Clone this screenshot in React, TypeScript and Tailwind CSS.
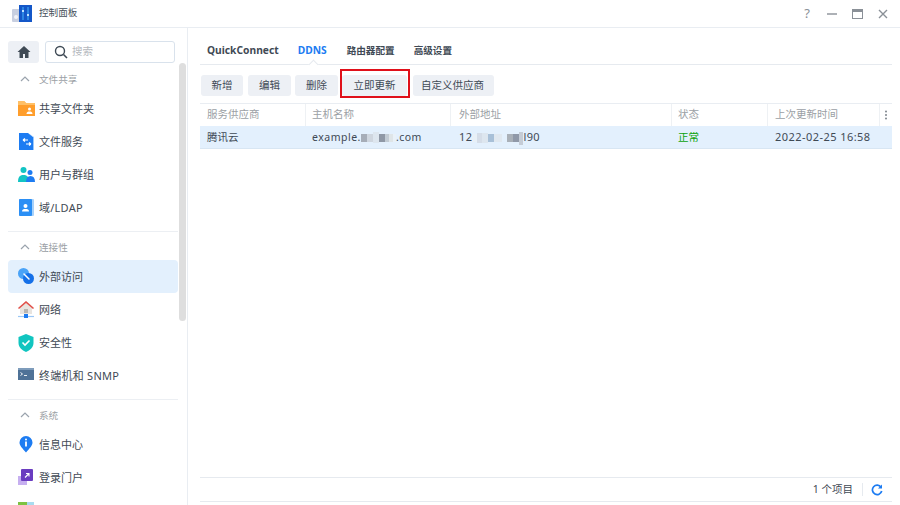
import React from "react";

const cjk = "font-['Noto_Sans','Noto_Sans_CJK_SC',sans-serif]";

function Ico({ children }: { children: React.ReactNode }) {
  return (
    <svg width="18" height="18" viewBox="0 0 18 18" className="shrink-0">
      {children}
    </svg>
  );
}

const icons: Record<string, React.ReactNode> = {
  folder: (
    <Ico>
      <path d="M0 1h6l2 2h9v13H0z" fill="#ff9e2c" />
      <path d="M0 1h6l2 2h9v2H0z" fill="#ffc067" />
      <circle cx="11.500" cy="9" r="1.500" fill="#fff" />
      <path d="M8.500 14c0-2 1.500-2.500 3-2.500s3 .5 3 2.500z" fill="#fff" />
    </Ico>
  ),
  files: (
    <Ico>
      <path d="M1 0h9l5 4v13H1z" fill="#1d7cf2" />
      <path d="M10 0l6 4v13h-1V4z" fill="#9cc9fb" />
      <path d="M5 7h5M5 7l2-1.500M5 7l2 1.500M13 11H8M13 11l-2-1.500M13 11l-2 1.500" stroke="#fff" strokeWidth="1.200" fill="none" />
    </Ico>
  ),
  users: (
    <Ico>
      <circle cx="5.500" cy="4" r="3" fill="#12c4c4" />
      <path d="M0 16c0-6 2.500-7 5.500-7s5.500 1 5.500 7z" fill="#12c4c4" />
      <circle cx="12" cy="6.500" r="2.500" fill="#1d7cf2" />
      <path d="M8 16c0-4 1.500-6 4.500-6S17 12 17 16z" fill="#1d7cf2" />
    </Ico>
  ),
  domain: (
    <Ico>
      <rect x="1" y="0" width="15" height="17" rx="1" fill="#a8d2fb" />
      <rect x="1" y="0" width="13" height="17" rx="1" fill="#2b8ff5" />
      <circle cx="7.500" cy="7" r="2" fill="#fff" />
      <path d="M4 12.500c0-2 1.500-2.500 3.500-2.500s3.500.5 3.500 2.500z" fill="#fff" />
    </Ico>
  ),
  external: (
    <Ico>
      <circle cx="5.500" cy="5.500" r="5.500" fill="#4aa3f7" />
      <path d="M2 7l4-4 6 6-4 4z" fill="#4aa3f7" />
      <circle cx="10.500" cy="10.500" r="5.500" fill="#1570e8" />
      <path d="M6 6l5 5" stroke="#fff" strokeWidth="1.500" strokeLinecap="round" />
    </Ico>
  ),
  network: (
    <Ico>
      <path d="M8 0L0 7h2v6h12V7h2z" fill="#e8e4df" />
      <path d="M8 0L0 7l1 1 7-6 7 6 1-1z" fill="#e2504a" />
      <rect x="6" y="8" width="4" height="4" fill="#b9b5b0" />
      <path d="M0 15.500h16" stroke="#9ac6f5" strokeWidth="1.200" />
      <rect x="6" y="13" width="4" height="4" fill="#1d7cf2" />
    </Ico>
  ),
  shield: (
    <Ico>
      <path d="M8 0l7.500 3v6c0 4-3.500 7.500-7.500 9-4-1.500-7.500-5-7.500-9V3z" fill="#11c5c0" />
      <path d="M4.500 8.500L7 11l4.500-4.500" stroke="#fff" strokeWidth="1.600" fill="none" />
    </Ico>
  ),
  terminal: (
    <Ico>
      <rect x="0" y="1" width="16" height="12" fill="#4f7297" />
      <rect x="0" y="1" width="16" height="2" fill="#7e9cbb" />
      <path d="M2.500 5.500l2 1.500-2 1.500M6 8.500h3" stroke="#fff" strokeWidth="0.900" fill="none" />
    </Ico>
  ),
  info: (
    <Ico>
      <path d="M8 0a6.500 6.500 0 0 1 6.500 6.500c0 3-3 6-6.500 10-3.500-4-6.500-7-6.500-10A6.500 6.500 0 0 1 8 0z" fill="#1d7cf2" />
      <circle cx="8" cy="3.500" r="1" fill="#fff" />
      <rect x="7.100" y="5.500" width="1.800" height="5" fill="#fff" />
    </Ico>
  ),
  portal: (
    <Ico>
      <rect x="0" y="7" width="9" height="9" fill="#c6aff0" />
      <rect x="3" y="0" width="12" height="12" rx="1" fill="#6a3cc0" />
      <path d="M7 8.500l4-4M8 4.500h3v3" stroke="#fff" strokeWidth="1.100" fill="none" />
    </Ico>
  ),
  next: (
    <Ico>
      <rect x="0" y="0" width="16" height="16" fill="#7dc242" />
      <rect x="9" y="0" width="7" height="8" fill="#a8dcf0" />
    </Ico>
  ),
};

function Section({ label }: { label: string }) {
  return (
    <div className="flex items-center h-[28px] pt-[2px] pl-[10px]">
      <svg width="14" height="14" viewBox="0 0 14 14" className="mr-[7px] shrink-0">
        <path d="M3 9l4-4 4 4" stroke="#9aa3ad" strokeWidth="1.200" fill="none" />
      </svg>
      <span className="text-[9.600px] text-[#9b9fa5] pt-[2px]">{label}</span>
    </div>
  );
}

function Item({ icon, label, active, wide }: { icon: string; label: string; active?: boolean; wide?: boolean }) {
  return (
    <div className={`flex items-center h-[33px] pl-[10px] gap-[3px] rounded-[4px] ${active ? "bg-[#e3f0fd]" : ""}`}>
      {icons[icon]}
      <span className={`text-[11px] text-[#3f4a55] whitespace-nowrap pt-[2px] ${wide ? "tracking-[0.25px]" : ""}`}>{label}</span>
    </div>
  );
}

function Divider() {
  return <div className="h-px bg-[#eceff3]" />;
}

function Sidebar() {
  return (
    <div className="w-[188px] shrink-0 h-full border-r border-[#e9edf2] overflow-hidden flex flex-col pt-[13px] relative">
      <div className="flex pl-[8px] gap-[6px]">
        <div className="w-[31px] h-[22px] rounded-[3px] bg-[#edf0f5] flex items-center justify-center">
          <svg width="14" height="14" viewBox="0 0 14 14">
            <path d="M7 1L0.500 7H2.500v6h3.500V9h2v4h3.500V7h2z" fill="#3f4a55" />
          </svg>
        </div>
        <div className="w-[130px] h-[22px] rounded-[3px] border border-[#d9e2ec] flex items-center pl-[8px] gap-[4px]">
          <svg width="14" height="14" viewBox="0 0 14 14">
            <circle cx="6" cy="6" r="4.500" stroke="#3f4a55" strokeWidth="1.400" fill="none" />
            <path d="M9.500 9.500L13 13" stroke="#3f4a55" strokeWidth="1.600" />
          </svg>
          <span className="text-[10.500px] text-[#b5b9be]">搜索</span>
        </div>
      </div>
      <div className="w-[170px] ml-[8px] mt-[1px]">
        <Section label="文件共享" />
        <Item icon="folder" label="共享文件夹" />
        <Item icon="files" label="文件服务" />
        <Item icon="users" label="用户与群组" />
        <Item icon="domain" label="域/LDAP" wide />
        <div className="h-[7px]" />
        <Divider />
        <Section label="连接性" />
        <Item icon="external" label="外部访问" active />
        <Item icon="network" label="网络" />
        <Item icon="shield" label="安全性" />
        <Item icon="terminal" label="终端机和 SNMP" wide />
        <div className="h-[7px]" />
        <Divider />
        <Section label="系统" />
        <Item icon="info" label="信息中心" />
        <Item icon="portal" label="登录门户" />
        <Item icon="next" label="" />
      </div>
      <div className="absolute left-[179px] top-[35px] w-[7px] h-[258px] rounded-[4px] bg-[#dedede]" />
    </div>
  );
}

function Btn({ label, className = "" }: { label: string; className?: string }) {
  return (
    <div className={`h-[21px] rounded-[3px] bg-[#edf0f5] flex items-center justify-center text-[10.500px] text-[#3f4a55] whitespace-nowrap ${className}`}>
      {label}
    </div>
  );
}

function Mosaic({ blocks }: { blocks: [number, string, number?][] }) {
  return (
    <span className="inline-flex items-center h-[10px] align-[-1px] tracking-normal">
      {blocks.map(([w, c, h], i) => (
        <span key={i} className="inline-block shrink-0" style={{ width: w, height: h ?? 8, backgroundColor: c }} />
      ))}
    </span>
  );
}

const cols = ["w-[106px]", "w-[145px]", "w-[221px]", "w-[96px]", "w-[112px]"];
const pads = ["pl-[7px]", "pl-[6px]", "pl-[8px]", "pl-[6px]", "pl-[7px]"];

function App() {
  return (
    <div className={`w-[900px] h-[505px] bg-white flex flex-col overflow-hidden ${cjk}`}>
      <div className="h-[28px] shrink-0 border-b border-[#e9edf2] flex items-center pl-[12px] pr-[12px]">
        <svg width="20" height="18" viewBox="0 0 20 18" className="shrink-0">
          <rect x="0" y="4" width="8" height="13" rx="1" fill="#c8cfe0" />
          <circle cx="4" cy="12" r="2" fill="#f1f3f8" />
          <rect x="7" y="0" width="13" height="17" fill="#1457c8" />
          <path d="M11 2v13M16 2v13" stroke="#3ea6f5" strokeWidth="1.200" />
          <rect x="10" y="5" width="2" height="2" fill="#bfe2ff" />
          <rect x="15" y="9" width="2" height="2" fill="#bfe2ff" />
        </svg>
        <span className="text-[9.600px] text-[#46505a] ml-[7px]">控制面板</span>
        <div className="ml-auto flex items-center text-[#8a9097]">
          <span className="text-[13px] mr-[17px] leading-none">?</span>
          <svg width="10" height="10" viewBox="0 0 10 10" className="mr-[15px]"><path d="M0 5h10" stroke="#8a9097" strokeWidth="1.400" /></svg>
          <svg width="11" height="10" viewBox="0 0 11 10" className="mr-[15px]"><rect x="0.500" y="0.500" width="10" height="9" fill="none" stroke="#8a9097" /><rect x="0.500" y="0.500" width="10" height="2.500" fill="#8a9097" /></svg>
          <svg width="10" height="10" viewBox="0 0 10 10"><path d="M1 1l8 8M9 1l-8 8" stroke="#8a9097" strokeWidth="1.400" /></svg>
        </div>
      </div>
      <div className="flex-1 flex min-h-0">
        <Sidebar />
        <div className="flex-1 pl-[12px] pr-[8px] flex flex-col min-w-0">
          <div className="h-[37px] shrink-0 border-b border-[#e6eaef] flex items-center pl-[7px] gap-[19px] pt-[10px] relative">
            <span className="text-[10.250px] font-bold text-[#3f4a55]">QuickConnect</span>
            <span className="text-[10.250px] font-bold text-[#1d7cf2]">DDNS</span>
            <span className="text-[9.600px] font-bold text-[#3f4a55] ml-[1px]">路由器配置</span>
            <span className="text-[9.600px] font-bold text-[#3f4a55]">高级设置</span>
            <div className="absolute left-[110px] bottom-[-4px] w-[7px] h-[7px] rotate-45 bg-white border-l border-t border-[#e6eaef]" />
          </div>
          <div className="flex mt-[10px] gap-[4px] pl-[1px] relative">
            <Btn label="新增" className="w-[42px] mr-[1px]" />
            <Btn label="编辑" className="w-[43px]" />
            <Btn label="删除" className="w-[43px]" />
            <Btn label="立即更新" className="w-[65px] mr-[2px]" />
            <Btn label="自定义供应商" className="w-[81px] pr-[2px]" />
            <div className="absolute left-[140px] top-[-6px] w-[70px] h-[29px] border-2 border-[#e0101a]" />
          </div>
          <div className="mt-[7px] flex h-[23px] shrink-0 border-t border-[#e9edf2] items-center text-[10.500px] text-[#9b9fa5]">
            {["服务供应商", "主机名称", "外部地址", "状态", "上次更新时间"].map((h, i) => (
              <div key={h} className={`${cols[i]} ${pads[i]} h-full flex items-center border-r border-[#eef1f4]`}>{h}</div>
            ))}
            <div className="flex-1 flex items-center justify-center">
              <svg width="4" height="10" viewBox="0 0 4 10"><circle cx="2" cy="1.500" r="1" fill="#7e858c" /><circle cx="2" cy="5" r="1" fill="#7e858c" /><circle cx="2" cy="8.500" r="1" fill="#7e858c" /></svg>
            </div>
          </div>
          <div className="flex h-[23px] shrink-0 bg-[#e3f0fd] border-b border-[#d8e6f3] items-center pt-[1px] text-[10.500px] text-[#3f4a55]">
            <div className={`${cols[0]} pl-[7px]`}>腾讯云</div>
            <div className={`${cols[1]} pl-[6px] tracking-[0.5px] whitespace-nowrap`}>
              example.
              <Mosaic blocks={[[6, "#a6adb8"], [6, "#cfd6df"], [6, "#dde6ef", 11], [6, "#8f98a6"], [4, "#c2cbd4"], [4, "#dfe5e8"], [3, "#e9f1f8"]]} />
              .com
            </div>
            <div className={`${cols[2]} pl-[8px] text-[11px] tracking-[0.4px] whitespace-nowrap`}>
              12
              <Mosaic blocks={[[5, "#e8f0f7"], [5, "#d5dde8", 10], [6, "#dde6ef", 10], [6, "#a8c0d8"], [8, "#e0e8f0"], [5, "#e3f0fd"], [6, "#a9b0b8"], [6, "#8f98a8"], [4, "#c5ccd6", 13]]} />
              l90
            </div>
            <div className={`${cols[3]} pl-[6px] text-[#0ba20b]`}>正常</div>
            <div className="pl-[7px] text-[11px] tracking-[0.45px] whitespace-nowrap">2022-02-25 16:58</div>
          </div>
          <div className="flex-1" />
          <div className="h-[25px] shrink-0 border-t border-b border-[#e6eaef] flex items-center justify-end mb-[3px]">
            <span className="text-[10.500px] text-[#3f4a55] pt-[1px]">1 个项目</span>
            <div className="w-px h-[13px] bg-[#e6eaef] ml-[9px] mr-[8px]" />
            <svg width="12" height="12" viewBox="0 0 12 12" className="mr-[9px]">
              <path d="M10 3.200A4.700 4.700 0 1 0 10.700 7" stroke="#1d7cf2" strokeWidth="1.700" fill="none" />
              <path d="M11 0.500v4H7z" fill="#1d7cf2" />
            </svg>
          </div>
        </div>
      </div>
    </div>
  );
}

export default App;
